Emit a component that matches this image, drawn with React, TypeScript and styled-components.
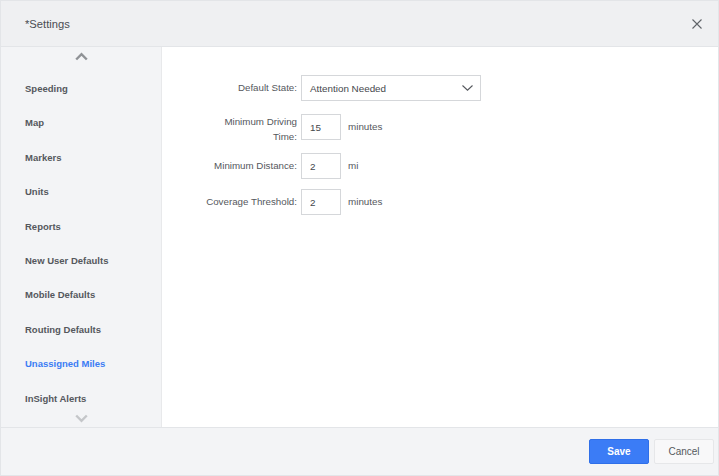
import * as React from 'react'
import styled, { createGlobalStyle } from 'styled-components'

const GlobalStyle = createGlobalStyle`
  html, body { margin: 0; padding: 0; background: #fff; }
  body { font-family: "Liberation Sans", Arial, sans-serif; }
`

const Modal = styled.div`
  width: 719px;
  height: 476px;
  box-sizing: border-box;
  border: 1px solid #e3e5e8;
  display: flex;
  flex-direction: column;
  overflow: hidden;
`

const Header = styled.header`
  height: 46px;
  flex: none;
  box-sizing: border-box;
  border-bottom: 1px solid #e3e5e8;
  background: #eff0f2;
  display: flex;
  align-items: center;
  justify-content: space-between;
  padding: 0 16px 0 24px;
`

const Title = styled.div`
  font-size: 11.2px;
  color: #4a4d52;
`

const CloseButton = styled.div`
  width: 10px;
  height: 10px;
  display: flex;
  color: #5f6368;
`

const Body = styled.div`
  flex: 1;
  display: flex;
  min-height: 0;
`

const Sidebar = styled.nav`
  width: 161px;
  flex: none;
  box-sizing: border-box;
  background: #f3f4f6;
  border-right: 1px solid #e8e9eb;
  display: flex;
  flex-direction: column;
  align-items: stretch;
`

const Arrow = styled.div<{ $top: number; $color: string }>`
  height: 12px;
  margin-top: ${p => p.$top}px;
  display: flex;
  justify-content: center;
  color: ${p => p.$color};
`

const NavList = styled.div`
  margin-top: 8px;
  display: flex;
  flex-direction: column;
`

const NavItem = styled.div<{ $active?: boolean }>`
  height: 34.4px;
  line-height: 34.4px;
  padding-left: 24px;
  font-size: 9.5px;
  font-weight: 700;
  color: ${p => (p.$active ? '#3b7cf4' : '#55585d')};
`

const Content = styled.main`
  flex: 1;
  background: #fff;
  padding: 28px 0 0 39px;
  display: flex;
  flex-direction: column;
`

const Row = styled.div<{ $gap: number }>`
  display: flex;
  align-items: flex-start;
  height: 26px;
  margin-bottom: ${p => p.$gap}px;
`

const Label = styled.div<{ $wrapped?: boolean }>`
  width: 96px;
  margin-right: 4px;
  padding-top: ${p => (p.$wrapped ? 1 : 5.75)}px;
  text-align: right;
  font-size: 9.75px;
  line-height: 14.5px;
  color: #55585d;
`

const Select = styled.div`
  width: 180px;
  height: 26px;
  box-sizing: border-box;
  border: 1px solid #d5d7da;
  display: flex;
  align-items: center;
  justify-content: space-between;
  padding: 0 7px 0 8px;
  font-size: 9.85px;
  color: #44474c;
`

const Chevron = styled.div`
  display: flex;
  color: #55585d;
`

const NumberBox = styled.input`
  width: 40px;
  height: 26px;
  box-sizing: border-box;
  border: 1px solid #d5d7da;
  border-radius: 0;
  outline: none;
  padding: 0 8px;
  margin: 0;
  font-family: inherit;
  font-size: 9.85px;
  color: #44474c;
  background: #fff;
`

const Unit = styled.div`
  margin-left: 7px;
  font-size: 9.85px;
  line-height: 26px;
  color: #55585d;
`

const Footer = styled.footer`
  height: 48px;
  flex: none;
  box-sizing: border-box;
  border-top: 1px solid #e3e5e8;
  background: #f3f4f6;
  display: flex;
  align-items: center;
  justify-content: flex-end;
  gap: 5px;
  padding: 0 4px 0 0;
`

const Button = styled.button<{ $primary?: boolean }>`
  width: 60px;
  height: 25px;
  box-sizing: border-box;
  border-radius: 2px;
  border: 1px solid ${p => (p.$primary ? '#2f6fe8' : '#e6e7e9')};
  background: ${p => (p.$primary ? '#3b7cf6' : '#f8f8f9')};
  color: ${p => (p.$primary ? '#fff' : '#55585d')};
  font-family: inherit;
  font-size: 10px;
  font-weight: ${p => (p.$primary ? 700 : 400)};
  padding: 0;
`

const menu = [
  'Speeding',
  'Map',
  'Markers',
  'Units',
  'Reports',
  'New User Defaults',
  'Mobile Defaults',
  'Routing Defaults',
  'Unassigned Miles',
  'InSight Alerts',
]

export default function App() {
  return (
    <>
      <GlobalStyle />
      <Modal>
        <Header>
          <Title>*Settings</Title>
          <CloseButton>
            <svg width="10" height="10" viewBox="0 0 10 10" fill="none" stroke="currentColor" strokeWidth="1.1">
              <path d="M0.5 0.5 L9.5 9.5 M9.5 0.5 L0.5 9.5" />
            </svg>
          </CloseButton>
        </Header>
        <Body>
          <Sidebar>
            <Arrow $top={5} $color="#8f9296">
              <svg width="13" height="9" viewBox="0 0 13 9" fill="none" stroke="currentColor" strokeWidth="2.4">
                <path d="M1.2 7.5 L6.5 2.2 L11.8 7.5" />
              </svg>
            </Arrow>
            <NavList>
              {menu.map(m => (
                <NavItem key={m} $active={m === 'Unassigned Miles'}>{m}</NavItem>
              ))}
            </NavList>
            <Arrow $top={-2} $color="#c4c6c9">
              <svg width="13" height="9" viewBox="0 0 13 9" fill="none" stroke="currentColor" strokeWidth="2.4">
                <path d="M1.2 1.5 L6.5 6.8 L11.8 1.5" />
              </svg>
            </Arrow>
          </Sidebar>
          <Content>
            <Row $gap={13}>
              <Label>Default State:</Label>
              <Select>
                Attention Needed
                <Chevron>
                  <svg width="11" height="6" viewBox="0 0 11 6" fill="none" stroke="currentColor" strokeWidth="1.1">
                    <path d="M0.5 0.5 L5.5 5.2 L10.5 0.5" />
                  </svg>
                </Chevron>
              </Select>
            </Row>
            <Row $gap={13}>
              <Label $wrapped>Minimum Driving Time:</Label>
              <NumberBox defaultValue="15" />
              <Unit>minutes</Unit>
            </Row>
            <Row $gap={10}>
              <Label>Minimum Distance:</Label>
              <NumberBox defaultValue="2" />
              <Unit>mi</Unit>
            </Row>
            <Row $gap={0}>
              <Label>Coverage Threshold:</Label>
              <NumberBox defaultValue="2" />
              <Unit>minutes</Unit>
            </Row>
          </Content>
        </Body>
        <Footer>
          <Button $primary>Save</Button>
          <Button>Cancel</Button>
        </Footer>
      </Modal>
    </>
  )
}
